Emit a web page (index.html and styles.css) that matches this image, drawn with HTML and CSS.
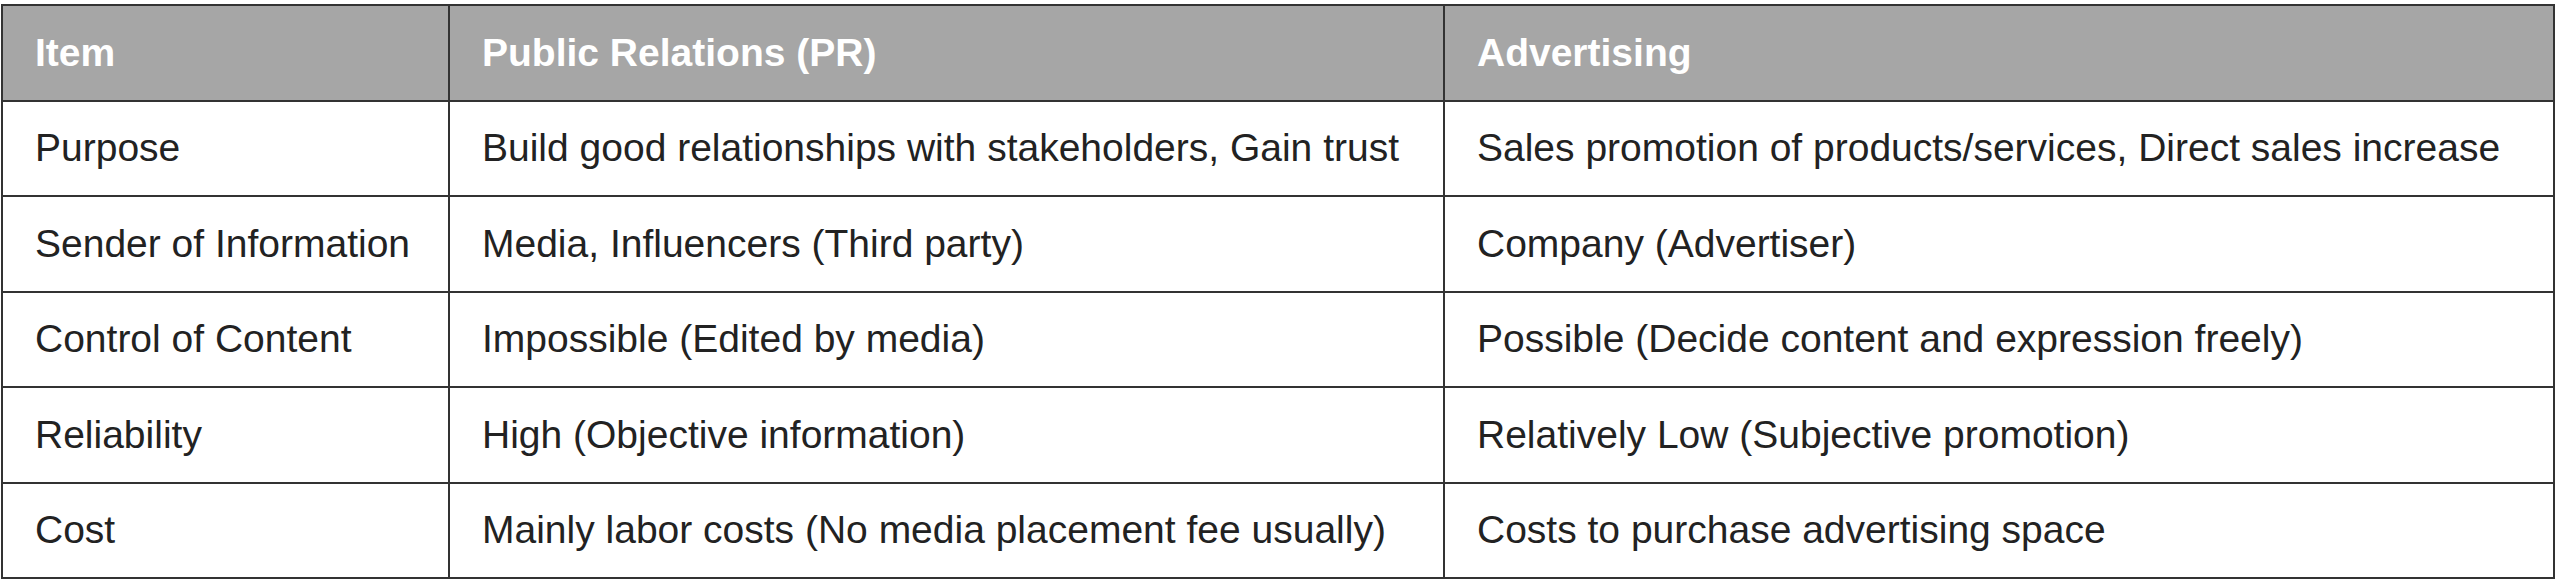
FILE: index.html
```html
<!DOCTYPE html>
<html>
<head>
<meta charset="utf-8">
<link rel="stylesheet" href="styles.css">
</head>
<body>
<div class="page">
<table class="compare">
  <colgroup>
    <col class="c1">
    <col class="c2">
    <col class="c3">
  </colgroup>
  <thead>
    <tr><th>Item</th><th>Public Relations (PR)</th><th>Advertising</th></tr>
  </thead>
  <tbody>
    <tr><td>Purpose</td><td>Build good relationships with stakeholders, Gain trust</td><td>Sales promotion of products/services, Direct sales increase</td></tr>
    <tr><td>Sender of Information</td><td>Media, Influencers (Third party)</td><td>Company (Advertiser)</td></tr>
    <tr><td>Control of Content</td><td>Impossible (Edited by media)</td><td>Possible (Decide content and expression freely)</td></tr>
    <tr><td>Reliability</td><td>High (Objective information)</td><td>Relatively Low (Subjective promotion)</td></tr>
    <tr><td>Cost</td><td>Mainly labor costs (No media placement fee usually)</td><td>Costs to purchase advertising space</td></tr>
  </tbody>
</table>
</div>
</body>
</html>
```
FILE: styles.css
```css
html, body {
  margin: 0;
  padding: 0;
  background: #ffffff;
}
.page {
  padding: 4px 0 0 1px;
}
.compare {
  border-collapse: collapse;
  table-layout: fixed;
  width: 2552px;
  font-family: "Liberation Sans", Arial, sans-serif;
  font-size: 39px;
  color: #222222;
}
.c1 { width: 447px; }
.c2 { width: 995px; }
.c3 { width: 1110px; }
.compare th,
.compare td {
  border: 2px solid #333333;
  height: 93.5px;
  padding: 0 0 0 32px;
  text-align: left;
  vertical-align: middle;
  white-space: nowrap;
}
.compare th {
  background: #a6a6a6;
  color: #ffffff;
  font-weight: bold;
}
```
